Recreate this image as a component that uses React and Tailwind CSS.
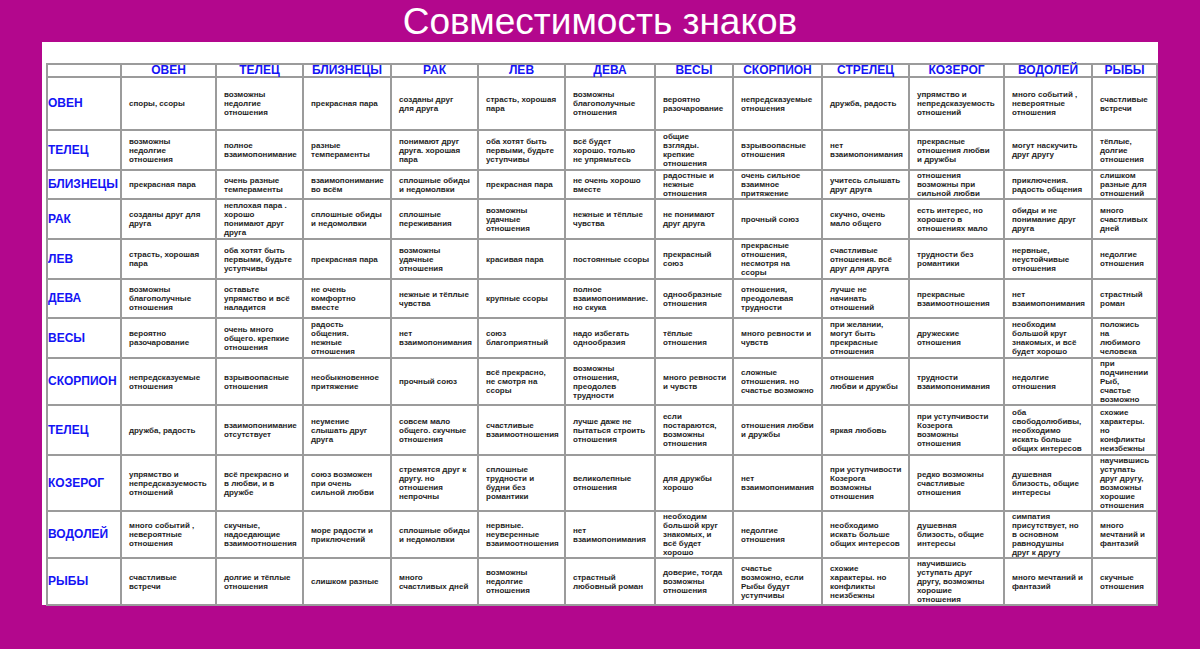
const cols = ["ОВЕН","ТЕЛЕЦ","БЛИЗНЕЦЫ","РАК","ЛЕВ","ДЕВА","ВЕСЫ","СКОРПИОН","СТРЕЛЕЦ","КОЗЕРОГ","ВОДОЛЕЙ","РЫБЫ"];
const widths = ["w-[74px]","w-[95px]","w-[87px]","w-[88px]","w-[87px]","w-[87px]","w-[90px]","w-[78px]","w-[89px]","w-[87px]","w-[95px]","w-[88px]","w-[65px]"];

const rows = [
  { label: "ОВЕН", h: "h-[53px]", cells: ["споры, ссоры","возможны / недолгие / отношения","прекрасная пара","созданы друг / для друга","страсть, хорошая / пара","возможны / благополучные / отношения","вероятно / разочарование","непредсказуемые / отношения","дружба, радость","упрямство и / непредсказуемость / отношений","много событий , / невероятные / отношения","счастливые / встречи"] },
  { label: "ТЕЛЕЦ", h: "h-[40px]", cells: ["возможны / недолгие / отношения","полное / взаимопонимание","разные / темпераменты","понимают друг / друга. хорошая / пара","оба хотят быть / первыми, будьте / уступчивы","всё будет / хорошо. только / не упрямьтесь","общие / взгляды. / крепкие / отношения","взрывоопасные / отношения","нет / взаимопонимания","прекрасные / отношения любви / и дружбы","могут наскучить / друг другу","тёплые, / долгие / отношения"] },
  { label: "БЛИЗНЕЦЫ", h: "h-[28px]", cells: ["прекрасная пара","очень разные / темпераменты","взаимопонимание / во всём","сплошные обиды / и недомолвки","прекрасная пара","не очень хорошо / вместе","радостные и / нежные / отношения","очень сильное / взаимное / притяжение","учитесь слышать / друг друга","отношения / возможны при / сильной любви","приключения. / радость общения","слишком / разные для / отношений"] },
  { label: "РАК", h: "h-[40px]", cells: ["созданы друг для / друга","неплохая пара . / хорошо / понимают друг / друга","сплошные обиды / и недомолвки","сплошные / переживания","возможны / удачные / отношения","нежные и тёплые / чувства","не понимают / друг друга","прочный союз","скучно, очень / мало общего","есть интерес, но / хорошего в / отношениях мало","обиды и не / понимание друг / друга","много / счастливых / дней"] },
  { label: "ЛЕВ", h: "h-[40px]", cells: ["страсть, хорошая / пара","оба хотят быть / первыми, будьте / уступчивы","прекрасная пара","возможны / удачные / отношения","красивая пара","постоянные ссоры","прекрасный / союз","прекрасные / отношения, / несмотря на / ссоры","счастливые / отношения. всё / друг для друга","трудности без / романтики","нервные, / неустойчивые / отношения","недолгие / отношения"] },
  { label: "ДЕВА", h: "h-[39px]", cells: ["возможны / благополучные / отношения","оставьте / упрямство и всё / наладится","не очень / комфортно / вместе","нежные и тёплые / чувства","крупные ссоры","полное / взаимопонимание. / но скука","однообразные / отношения","отношения, / преодолевая / трудности","лучше не / начинать / отношений","прекрасные / взаимоотношения","нет / взаимопонимания","страстный / роман"] },
  { label: "ВЕСЫ", h: "h-[40px]", cells: ["вероятно / разочарование","очень много / общего. крепкие / отношения","радость / общения. / нежные / отношения","нет / взаимопонимания","союз / благоприятный","надо избегать / однообразия","тёплые / отношения","много ревности и / чувств","при желании, / могут быть / прекрасные / отношения","дружеские / отношения","необходим / большой круг / знакомых, и всё / будет хорошо","положись / на / любимого / человека"] },
  { label: "СКОРПИОН", h: "h-[47px]", cells: ["непредсказуемые / отношения","взрывоопасные / отношения","необыкновенное / притяжение","прочный союз","всё прекрасно, / не смотря на / ссоры","возможны / отношения, / преодолев / трудности","много ревности / и чувств","сложные / отношения. но / счастье возможно","отношения / любви и дружбы","трудности / взаимопонимания","недолгие / отношения","при / подчинении / Рыб, / счастье / возможно"] },
  { label: "ТЕЛЕЦ", h: "h-[50px]", cells: ["дружба, радость","взаимопонимание / отсутствует","неумение / слышать друг / друга","совсем мало / общего. скучные / отношения","счастливые / взаимоотношения","лучше даже не / пытаться строить / отношения","если / постараются, / возможны / отношения","отношения любви / и дружбы","яркая любовь","при уступчивости / Козерога / возможны / отношения","оба / свободолюбивы, / необходимо / искать больше / общих интересов","схожие / характеры. / но / конфликты / неизбежны"] },
  { label: "КОЗЕРОГ", h: "h-[55px]", cells: ["упрямство и / непредсказуемость / отношений","всё прекрасно и / в любви, и в / дружбе","союз возможен / при очень / сильной любви","стремятся друг к / другу. но / отношения / непрочны","сплошные / трудности и / будни без / романтики","великолепные / отношения","для дружбы / хорошо","нет / взаимопонимания","при уступчивости / Козерога / возможны / отношения","редко возможны / счастливые / отношения","душевная / близость, общие / интересы","научившись / уступать / друг другу, / возможны / хорошие / отношения"] },
  { label: "ВОДОЛЕЙ", h: "h-[47px]", cells: ["много событий , / невероятные / отношения","скучные, / надоедающие / взаимоотношения","море радости и / приключений","сплошные обиды / и недомолвки","нервные. / неуверенные / взаимоотношения","нет / взаимопонимания","необходим / большой круг / знакомых, и / всё будет / хорошо","недолгие / отношения","необходимо / искать больше / общих интересов","душевная / близость, общие / интересы","симпатия / присутствует, но / в основном / равнодушны / друг к другу","много / мечтаний и / фантазий"] },
  { label: "РЫБЫ", h: "h-[46px]", cells: ["счастливые / встречи","долгие и тёплые / отношения","слишком разные","много / счастливых дней","возможны / недолгие / отношения","страстный / любовный роман","доверие, тогда / возможны / отношения","счастье / возможно, если / Рыбы будут / уступчивы","схожие / характеры. но / конфликты / неизбежны","научившись / уступать друг / другу, возможны / хорошие / отношения","много мечтаний и / фантазий","скучные / отношения"] },
];

function Lines({ text }) {
  const parts = text.split(" / ");
  return parts.map((p, i) => (
    <span key={i}>
      {p}
      {i < parts.length - 1 ? <br /> : null}
    </span>
  ));
}

export default function App() {
  return (
    <div className="w-[1200px] h-[649px] bg-[#b3078d] overflow-hidden flex flex-col">
      <div className="h-[42px] flex items-center justify-center text-white text-[37px] leading-none font-['Liberation_Sans',Arial,sans-serif]">
        Совместимость знаков
      </div>
      <div className="ml-[42px] w-[1116px] h-[563px] bg-white pt-[21px] pl-[4px]">
        <table className="table-fixed border-collapse w-[1110px] h-[538px]">
          <colgroup>
            {widths.map((w, i) => <col key={i} className={w} />)}
          </colgroup>
          <tbody>
            <tr className="h-[13px]">
              <td className="border-2 border-[#9b9b9b] p-0"></td>
              {cols.map((c, i) => (
                <td key={i} className="border-2 border-[#9b9b9b] p-0 text-center text-[#1414f5] text-[12px] leading-[11px] font-bold font-['Liberation_Sans',Arial,sans-serif]">{c}</td>
              ))}
            </tr>
            {rows.map((r, ri) => (
              <tr key={ri} className={r.h}>
                <td className="border-2 border-[#9b9b9b] p-0 align-middle text-[#1414f5] text-[12px] leading-[13px] font-bold font-['Liberation_Sans',Arial,sans-serif] whitespace-nowrap">{r.label}</td>
                {r.cells.map((c, ci) => (
                  <td key={ci} className="border-2 border-[#9b9b9b] py-0 pl-[7px] pr-[2px] align-middle whitespace-nowrap text-[#1e1e1e] text-[8px] leading-[9px] font-bold font-['Liberation_Sans',Arial,sans-serif]">
                    <Lines text={c} />
                  </td>
                ))}
              </tr>
            ))}
          </tbody>
        </table>
      </div>
    </div>
  );
}
